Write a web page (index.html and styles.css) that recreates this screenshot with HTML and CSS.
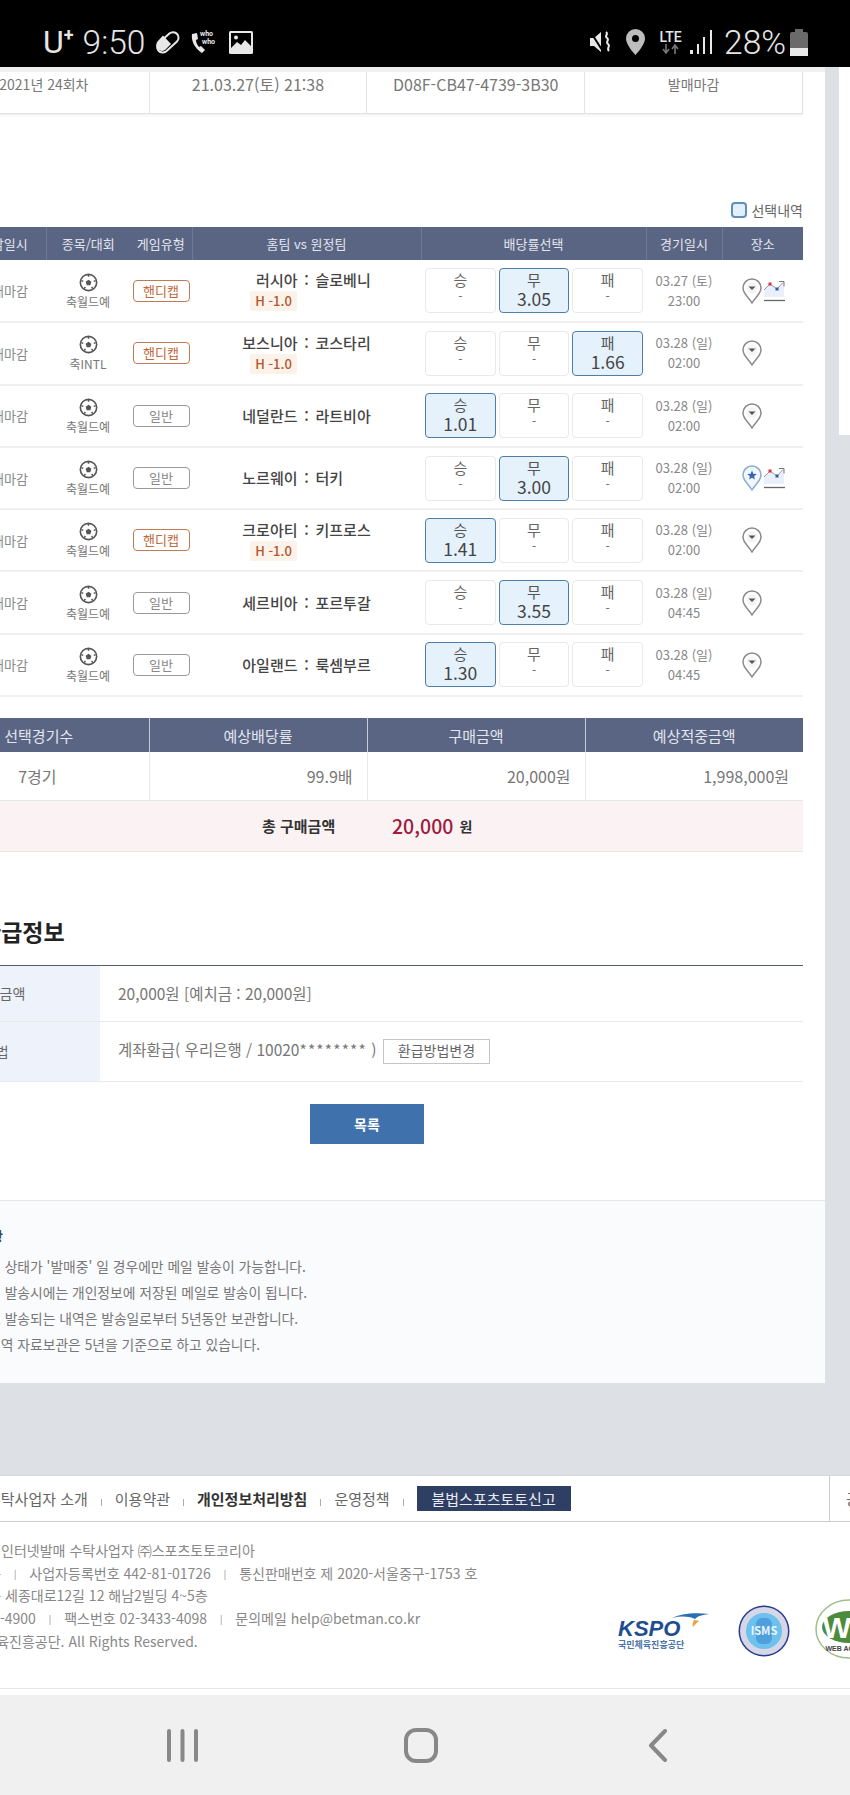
FILE: index.html
```html
<!DOCTYPE html>
<html lang="ko">

<head>
    <meta charset="UTF-8">
    <meta name="viewport" content="width=device-width, initial-scale=1.0">
    <title>구매내역 상세</title>
    <link rel="stylesheet" href="styles.css">
</head>

<body>
    <svg class="defs" width="0" height="0">
        <symbol id="ball" viewBox="0 0 20 20">
            <circle cx="10" cy="10" r="8.6" fill="#fff" stroke="#555" stroke-width="1.7" />
            <polygon points="10,7 13,9.2 11.9,12.8 8.1,12.8 7,9.2" fill="#555" />
            <path d="M10 2v2M2.5 8l2 .8M17.5 8l-2 .8M5.5 16.5l1.2-1.8M14.5 16.5l-1.2-1.8" stroke="#555" stroke-width="1.6" />
        </symbol>
        <symbol id="pin" viewBox="0 0 20 26">
            <path d="M10 25C7.5 20 1 16 1 10a9 9 0 0 1 18 0c0 6-6.500 10-9 15z" fill="#fff" stroke="#8a8a8a" stroke-width="1.500" />
            <circle cx="10" cy="10" r="5.500" fill="#f4f4f4" />
            <polygon points="6.500,8.500 13.500,8.500 10,12" fill="#555" />
        </symbol>
        <symbol id="pin-star" viewBox="0 0 20 26">
            <path d="M10 25C7.500 20 1 16 1 10a9 9 0 0 1 18 0c0 6-6.500 10-9 15z" fill="#f2f6fc" stroke="#86acd6" stroke-width="1.500" />
            <polygon points="10,5.500 11.300,8.800 14.700,9 12.100,11.200 12.900,14.500 10,12.700 7.100,14.500 7.900,11.200 5.300,9 8.700,8.800" fill="#3565b0" />
        </symbol>
        <symbol id="chart" viewBox="0 0 22 22">
            <polygon points="1,10 7,4 14,9 21,2 21,17 1,17" fill="#e9f0fb" />
            <polyline points="1,10 7,4 14,9 20,2.500" fill="none" stroke="#9a9a9a" stroke-width="1" />
            <path d="M16 1.500h5v5" fill="none" stroke="#777" stroke-width="1" />
            <rect x="5.500" y="2.500" width="3" height="3" fill="#d0393f" />
            <rect x="12.500" y="7.500" width="3" height="3" fill="#2d5bab" />
            <path d="M1 20.500h21" stroke="#666" stroke-width="1.300" />
        </symbol>
    </svg>

    <div class="statusbar">
        <div class="status-left">
            <span class="carrier">U<sup>+</sup></span>
            <span class="clock">9:50</span>
            <svg class="st-icon pill" width="27" height="24" viewBox="0 0 27 24">
                <rect x="1" y="7" width="25" height="11" rx="5.500" transform="rotate(-42 13.500 12)" fill="none" stroke="#e8e8e8" stroke-width="2" />
                <path d="M9 4.500l8 8.500-6 6a5.500 5.500 0 0 1-7-1 5.500 5.500 0 0 1-.5-7.500z" transform="translate(0 1)" fill="#e8e8e8" />
            </svg>
            <svg class="st-icon" width="30" height="26" viewBox="0 0 30 26">
                <path d="M3 5c-1 6 2 14 10 19l3-3-4-4-2 1c-2-2-3-5-3-7l2-1-1-6z" fill="#e8e8e8" />
                <text x="11" y="7" class="who">who</text>
                <text x="13" y="15" class="who">who</text>
            </svg>
            <svg class="st-icon" width="24" height="23" viewBox="0 0 24 23">
                <rect width="24" height="23" rx="1.500" fill="#e8e8e8" />
                <rect x="2" y="2" width="20" height="15" fill="#000" />
                <circle cx="7" cy="6.500" r="2" fill="#e8e8e8" />
                <path d="M2 17l6-6 4 3 4-5 6 6v2z" fill="#e8e8e8" />
            </svg>
        </div>
        <div class="status-right">
            <svg class="st-icon" width="24" height="26" viewBox="0 0 24 26">
                <path d="M1 9h4l7-6v20l-7-6H1z" fill="#e8e8e8" />
                <path d="M1 2l14 22" stroke="#000" stroke-width="2" />
                <path d="M17 3c3 2-2 4 1 6s-2 4 1 6-2 4 1 7" fill="none" stroke="#e8e8e8" stroke-width="2" />
            </svg>
            <svg class="st-icon" width="21" height="28" viewBox="0 0 21 28">
                <path fill-rule="evenodd" d="M10.500 1A9.500 9.500 0 0 0 1 10.500C1 17 10.500 27 10.500 27S20 17 20 10.500A9.500 9.500 0 0 0 10.500 1zm0 13a3.500 3.500 0 1 1 0-7 3.500 3.500 0 0 1 0 7z" fill="#bdbdbd" />
            </svg>
            <span class="lte">LTE<svg width="20" height="10" viewBox="0 0 20 10"><path d="M5 0v8M2 5l3 4 3-4" fill="none" stroke="#777" stroke-width="1.600" /><path d="M14 10V2M11 5l3-4 3 4" fill="none" stroke="#777" stroke-width="1.600" /></svg></span>
            <svg class="st-icon signal" width="23" height="26" viewBox="0 0 23 26">
                <rect x="0" y="21" width="3" height="4" fill="#e8e8e8" />
                <rect x="7" y="15" width="2" height="10" fill="#e8e8e8" />
                <rect x="13" y="8" width="2" height="17" fill="#e8e8e8" />
                <rect x="20" y="1" width="2" height="24" fill="#e8e8e8" />
            </svg>
            <span class="battery-text">28%</span>
            <div class="battery"><span></span></div>
        </div>
    </div>

    <div class="scroll">
        <div class="panel">
            <div class="content">
                <table class="info-top">
                    <tr>
                        <td>2021년 24회차</td>
                        <td class="num">21.03.27(토) 21:38</td>
                        <td class="num">D08F-CB47-4739-3B30</td>
                        <td>발매마감</td>
                    </tr>
                </table>

                <div class="legend"><span class="legend-box"></span>선택내역</div>

                <table class="games">
                    <colgroup>
                        <col class="c-close">
                        <col class="c-sport">
                        <col class="c-type">
                        <col class="c-team">
                        <col class="c-odds">
                        <col class="c-date">
                        <col class="c-place">
                    </colgroup>
                    <thead>
                        <tr>
                            <th>마감일시</th>
                            <th class="no-line">종목/대회</th>
                            <th>게임유형</th>
                            <th>홈팀 vs 원정팀</th>
                            <th>배당률선택</th>
                            <th>경기일시</th>
                            <th>장소</th>
                        </tr>
                    </thead>
                    <tbody>
                        <tr>
                            <td class="muted">발매마감</td>
                            <td class="sport"><svg class="ball"><use href="#ball" /></svg>축월드예</td>
                            <td><span class="tag tag-hc">핸디캡</span></td>
                            <td>
                                <div class="match"><span class="home">러시아</span><span>:</span><span>슬로베니</span></div>
                                <div class="chip">H -1.0</div>
                            </td>
                            <td>
                                <div class="odds">
                                    <div class="odd">승<b>-</b></div>
                                    <div class="odd on">무<b>3.05</b></div>
                                    <div class="odd">패<b>-</b></div>
                                </div>
                            </td>
                            <td class="date">03.27 (토)<br>23:00</td>
                            <td class="place"><svg class="pin"><use href="#pin" /></svg><svg class="chart"><use href="#chart" /></svg></td>
                        </tr>
                        <tr>
                            <td class="muted">발매마감</td>
                            <td class="sport"><svg class="ball"><use href="#ball" /></svg>축INTL</td>
                            <td><span class="tag tag-hc">핸디캡</span></td>
                            <td>
                                <div class="match"><span class="home">보스니아</span><span>:</span><span>코스타리</span></div>
                                <div class="chip">H -1.0</div>
                            </td>
                            <td>
                                <div class="odds">
                                    <div class="odd">승<b>-</b></div>
                                    <div class="odd">무<b>-</b></div>
                                    <div class="odd on">패<b>1.66</b></div>
                                </div>
                            </td>
                            <td class="date">03.28 (일)<br>02:00</td>
                            <td class="place"><svg class="pin"><use href="#pin" /></svg></td>
                        </tr>
                        <tr>
                            <td class="muted">발매마감</td>
                            <td class="sport"><svg class="ball"><use href="#ball" /></svg>축월드예</td>
                            <td><span class="tag">일반</span></td>
                            <td>
                                <div class="match"><span class="home">네덜란드</span><span>:</span><span>라트비아</span></div>
                            </td>
                            <td>
                                <div class="odds">
                                    <div class="odd on">승<b>1.01</b></div>
                                    <div class="odd">무<b>-</b></div>
                                    <div class="odd">패<b>-</b></div>
                                </div>
                            </td>
                            <td class="date">03.28 (일)<br>02:00</td>
                            <td class="place"><svg class="pin"><use href="#pin" /></svg></td>
                        </tr>
                        <tr>
                            <td class="muted">발매마감</td>
                            <td class="sport"><svg class="ball"><use href="#ball" /></svg>축월드예</td>
                            <td><span class="tag">일반</span></td>
                            <td>
                                <div class="match"><span class="home">노르웨이</span><span>:</span><span>터키</span></div>
                            </td>
                            <td>
                                <div class="odds">
                                    <div class="odd">승<b>-</b></div>
                                    <div class="odd on">무<b>3.00</b></div>
                                    <div class="odd">패<b>-</b></div>
                                </div>
                            </td>
                            <td class="date">03.28 (일)<br>02:00</td>
                            <td class="place"><svg class="pin"><use href="#pin-star" /></svg><svg class="chart"><use href="#chart" /></svg></td>
                        </tr>
                        <tr>
                            <td class="muted">발매마감</td>
                            <td class="sport"><svg class="ball"><use href="#ball" /></svg>축월드예</td>
                            <td><span class="tag tag-hc">핸디캡</span></td>
                            <td>
                                <div class="match"><span class="home">크로아티</span><span>:</span><span>키프로스</span></div>
                                <div class="chip">H -1.0</div>
                            </td>
                            <td>
                                <div class="odds">
                                    <div class="odd on">승<b>1.41</b></div>
                                    <div class="odd">무<b>-</b></div>
                                    <div class="odd">패<b>-</b></div>
                                </div>
                            </td>
                            <td class="date">03.28 (일)<br>02:00</td>
                            <td class="place"><svg class="pin"><use href="#pin" /></svg></td>
                        </tr>
                        <tr>
                            <td class="muted">발매마감</td>
                            <td class="sport"><svg class="ball"><use href="#ball" /></svg>축월드예</td>
                            <td><span class="tag">일반</span></td>
                            <td>
                                <div class="match"><span class="home">세르비아</span><span>:</span><span>포르투갈</span></div>
                            </td>
                            <td>
                                <div class="odds">
                                    <div class="odd">승<b>-</b></div>
                                    <div class="odd on">무<b>3.55</b></div>
                                    <div class="odd">패<b>-</b></div>
                                </div>
                            </td>
                            <td class="date">03.28 (일)<br>04:45</td>
                            <td class="place"><svg class="pin"><use href="#pin" /></svg></td>
                        </tr>
                        <tr>
                            <td class="muted">발매마감</td>
                            <td class="sport"><svg class="ball"><use href="#ball" /></svg>축월드예</td>
                            <td><span class="tag">일반</span></td>
                            <td>
                                <div class="match"><span class="home">아일랜드</span><span>:</span><span>룩셈부르</span></div>
                            </td>
                            <td>
                                <div class="odds">
                                    <div class="odd on">승<b>1.30</b></div>
                                    <div class="odd">무<b>-</b></div>
                                    <div class="odd">패<b>-</b></div>
                                </div>
                            </td>
                            <td class="date">03.28 (일)<br>04:45</td>
                            <td class="place"><svg class="pin"><use href="#pin" /></svg></td>
                        </tr>
                    </tbody>
                </table>

                <table class="summary">
                    <thead>
                        <tr>
                            <th>선택경기수</th>
                            <th>예상배당률</th>
                            <th>구매금액</th>
                            <th>예상적중금액</th>
                        </tr>
                    </thead>
                    <tbody>
                        <tr>
                            <td class="td-count">7경기</td>
                            <td>99.9배</td>
                            <td>20,000원</td>
                            <td>1,998,000원</td>
                        </tr>
                    </tbody>
                </table>
                <div class="total">
                    <span class="total-label">총 구매금액</span>
                    <span class="total-num">20,000</span>
                    <span class="total-won">원</span>
                </div>

                <h3 class="section-title">환급정보</h3>
                <table class="refund">
                    <tr>
                        <th>총 환급금액</th>
                        <td>20,000원 [예치금 : 20,000원]</td>
                    </tr>
                    <tr>
                        <th>환급방법</th>
                        <td>계좌환급( 우리은행 / 10020<span class="stars">********</span> ) <span class="btn-change">환급방법변경</span></td>
                    </tr>
                </table>
                <div class="actions"><a class="btn-list">목록</a></div>
            </div>

            <div class="notes">
                <h4>유의사항</h4>
                <ul>
                    <li>구매내역 상태가 '발매중' 일 경우에만 메일 발송이 가능합니다.</li>
                    <li>구매내역 발송시에는 개인정보에 저장된 메일로 발송이 됩니다.</li>
                    <li>이메일로 발송되는 내역은 발송일로부터 5년동안 보관합니다.</li>
                    <li>총적중내역 자료보관은 5년을 기준으로 하고 있습니다.</li>
                </ul>
            </div>
        </div>
        <div class="side"><div class="side-box"></div></div>
    </div>

    <footer class="footer">
        <div class="foot-nav">
            <ul class="foot-links">
                <li>수탁사업자 소개</li>
                <li>이용약관</li>
                <li class="strong">개인정보처리방침</li>
                <li>운영정책</li>
                <li class="report">불법스포츠토토신고</li>
            </ul>
            <div class="foot-family">공</div>
        </div>
        <div class="foot-body">
            <div class="foot-text">
                <p>체육진흥투표권 인터넷발매 수탁사업자 ㈜스포츠토토코리아</p>
                <p>대표이사 홍길동 <i>|</i> 사업자등록번호 442-81-01726 <i>|</i> 통신판매번호 제 2020-서울중구-1753 호</p>
                <p>주소 서울시중구 세종대로12길 12 해남2빌딩 4~5층</p>
                <p>전화 :&nbsp; 02-3433-4900 <i>|</i> 팩스번호 02-3433-4098 <i>|</i> 문의메일 help@betman.co.kr</p>
                <p>© 2021 국민체육진흥공단. All Rights Reserved.</p>
            </div>
            <div class="foot-logos">
                <div class="kspo">
                    <svg width="40" height="20" viewBox="0 0 40 20">
                        <path d="M2 6C10 2 24 0 39 2c-7 1-11 2-14 5C18 4 10 4 2 6z" fill="#2a6fb5" />
                        <path d="M24 8c3 0 5 1 5 1-2 1-4 4-6 6-1-2 0-5 1-7z" fill="#e9a43c" />
                    </svg>
                    <span class="kspo-name">KSPO</span>
                    <span class="kspo-sub">국민체육진흥공단</span>
                </div>
                <svg class="isms" width="54" height="54" viewBox="0 0 54 54">
                    <circle cx="27" cy="27" r="25.500" fill="#2a3a8c" />
                    <circle cx="27" cy="27" r="24" fill="#d5d7e6" />
                    <circle cx="27" cy="27" r="18" fill="#6cc1ee" />
                    <rect x="19" y="14" width="16" height="26" rx="6" fill="#4e9fdb" />
                    <text x="27" y="31" class="isms-text">ISMS</text>
                </svg>
                <svg class="wa" width="70" height="64" viewBox="0 0 70 64">
                    <ellipse cx="35" cy="30" rx="33" ry="29" fill="#fff" stroke="#9dbf8c" stroke-width="1.500" />
                    <ellipse cx="35" cy="28" rx="27" ry="16" fill="#4c8a3c" />
                    <text x="33" y="39" class="wa-text">WA</text>
                    <text x="35" y="52" class="wa-sub">WEB ACCESS</text>
                </svg>
            </div>
        </div>
    </footer>

    <div class="navbar">
        <svg width="33" height="33" viewBox="0 0 33 33">
            <path d="M3 2v29M16.500 2v29M30 2v29" stroke="#888" stroke-width="4" stroke-linecap="round" />
        </svg>
        <svg width="34" height="35" viewBox="0 0 34 35">
            <rect x="2" y="2" width="30" height="31" rx="10" fill="none" stroke="#888" stroke-width="4" />
        </svg>
        <svg width="20" height="33" viewBox="0 0 20 33">
            <path d="M17 2L3 16.500 17 31" fill="none" stroke="#888" stroke-width="4" stroke-linecap="round" stroke-linejoin="round" />
        </svg>
    </div>
</body>

</html>
```

FILE: styles.css
```css
* {
    box-sizing: border-box;
}

html,
body {
    margin: 0;
    width: 850px;
    height: 1795px;
    overflow: hidden;
}

body {
    font-family: "Noto Sans CJK KR", "Noto Sans", sans-serif;
    font-size: 13px;
    color: #666;
    background-color: #fff;
}

table {
    border-collapse: collapse;
    table-layout: fixed;
    width: 841px;
}

ul {
    list-style: none;
    margin: 0;
    padding: 0;
}

.defs {
    position: absolute;
}

/* status bar */
.statusbar {
    height: 67px;
    background-color: #000;
    color: #e6e6e6;
    display: flex;
    justify-content: space-between;
    align-items: center;
    padding: 17px 42px 0 43px;
    font-family: Roboto, sans-serif;
    font-weight: 300;
}

.status-left,
.status-right {
    display: flex;
    align-items: center;
}

.carrier {
    font-size: 32px;
    font-weight: 400;
    line-height: 34px;
}

.carrier sup {
    font-size: 18px;
    line-height: 0;
    vertical-align: 12px;
    font-weight: 700;
}

.clock {
    font-size: 33.5px;
    margin: 0 9px 0 9px;
}

.status-left .st-icon {
    margin-right: 10px;
}

.status-left .pill {
    margin-right: 8px;
}

.who {
    font-size: 7px;
    font-weight: 700;
    fill: #e8e8e8;
}

.status-right .st-icon {
    margin-right: 12px;
}

.lte {
    display: flex;
    flex-direction: column;
    align-items: center;
    font-size: 14px;
    font-weight: 500;
    line-height: 14px;
    margin-right: 7px;
    width: 25px;
}

.status-right .signal {
    margin-right: 11px;
}

.battery-text {
    font-size: 33.5px;
    margin-right: 4px;
}

.battery {
    width: 18px;
    height: 24px;
    margin-top: 3px;
    background-color: #6a6a6a;
    border-radius: 2px;
    position: relative;
    display: flex;
    align-items: flex-end;
}

.battery::before {
    content: "";
    position: absolute;
    top: -3px;
    left: 5px;
    width: 8px;
    height: 3px;
    background-color: #6a6a6a;
}

.battery span {
    display: block;
    width: 100%;
    height: 8px;
    background-color: #e8e8e8;
}

/* page */
.scroll {
    display: flex;
    height: 1408px;
    background-color: #dde0e5;
}

.panel {
    width: 863px;
    height: 1316px;
    margin-left: -38px;
    flex-shrink: 0;
    background-color: #fff;
    display: flex;
    flex-direction: column;
    border-top: 5px solid #f0f0f0;
}

.content {
    flex: 1;
}

.side {
    width: 25px;
    flex-shrink: 0;
    padding-left: 14px;
}

.side-box {
    width: 11px;
    height: 368px;
    background-color: #fff;
}

.info-top {
    height: 42px;
    border-bottom: 1px solid #dfe1e5;
    box-shadow: 0 2px 2px #f3f3f3;
}

.info-top td {
    text-align: center;
    vertical-align: top;
    padding-top: 2px;
    font-size: 14px;
    line-height: 20px;
    color: #777;
    border-right: 1px solid #e4e4e4;
}

.info-top .num {
    font-size: 16px;
}

.info-top td:first-child {
    width: 187px;
    text-align: right;
    padding-right: 60px;
}

.legend {
    display: flex;
    justify-content: flex-end;
    align-items: center;
    margin: 86px 22px 0 0;
    height: 20px;
    font-size: 14px;
    color: #666;
}

.legend-box {
    width: 16px;
    height: 16px;
    margin-right: 4px;
    background-color: #e3f0fb;
    border: 2px solid #5d90bd;
    border-radius: 4px;
}

/* game table */
.games {
    margin-top: 7px;
}

.c-close {
    width: 84px;
}

.c-sport {
    width: 84px;
}

.c-type {
    width: 62px;
}

.c-team {
    width: 229px;
}

.c-odds {
    width: 225px;
}

.c-date {
    width: 76px;
}

.c-place {
    width: 81px;
}

.games th,
.summary th {
    background-color: #5a6583;
    color: #e3e6ef;
    font-weight: 400;
    font-size: 13px;
    height: 33px;
    padding: 0;
    border-right: 1px solid #6f7995;
}

.games th:last-child,
.summary th:last-child {
    border-right: none;
}

.games th.no-line {
    border-right: none;
}

.games td {
    height: 62.3px;
    padding: 0;
    text-align: center;
    border-bottom: 2px solid #eeeff1;
    font-size: 13px;
    color: #888;
}

.games .sport {
    font-size: 12px;
    line-height: 14px;
    color: #777;
}

.ball {
    display: block;
    width: 19px;
    height: 19px;
    margin: 0 auto 3px;
}

.tag {
    display: inline-block;
    width: 57px;
    height: 22px;
    line-height: 19px;
    border: 1.5px solid #999;
    border-radius: 4px;
    font-size: 13px;
    color: #888;
}

.tag-hc {
    border-color: #c27a55;
    color: #c0683a;
}

.match {
    display: grid;
    grid-template-columns: 1fr 18px 1fr;
    font-size: 15px;
    font-weight: 500;
    line-height: 20px;
    color: #444;
    text-align: left;
}

.match span:nth-child(2) {
    text-align: center;
}

.home {
    text-align: right;
}

.games .chip {
    width: 47px;
    height: 20px;
    line-height: 20px;
    margin: 1px 0 0 58px;
    background-color: #fbf2ea;
    color: #b5552d;
    font-size: 13px;
    font-weight: 500;
    text-align: center;
    border-radius: 2px;
}

.odds {
    display: flex;
    gap: 3px;
    justify-content: flex-end;
    padding-right: 3px;
}

.odd {
    width: 70.7px;
    height: 45px;
    border: 1.5px solid #e8e9ea;
    border-radius: 4px;
    font-size: 15px;
    line-height: 17px;
    padding-top: 2px;
    color: #666;
    background-color: #fff;
}

.odd b {
    display: block;
    font-weight: 400;
    font-size: 12px;
    line-height: 16px;
}

.odd.on {
    background-color: #e5f1fb;
    border-color: #4f7fa8;
    color: #555;
}

.odd.on b {
    font-size: 17.5px;
    line-height: 22px;
    color: #444;
}

.date {
    line-height: 20px;
}

.games .place {
    text-align: left;
    padding-left: 20px;
}

.pin {
    width: 20px;
    height: 26px;
    vertical-align: middle;
}

.chart {
    width: 22px;
    height: 22px;
    margin-left: 1px;
    vertical-align: middle;
}

/* summary */
.summary {
    margin-top: 21px;
}

.summary th:nth-child(1) {
    width: 187px;
    padding-right: 33px;
}

.summary th:nth-child(2),
.summary th:nth-child(3) {
    width: 218px;
}

.summary th {
    height: 34px;
    font-size: 15px;
    border-right: 1px solid #c8ccd6;
}

.summary td {
    height: 48px;
    padding: 0 14px 0 0;
    text-align: right;
    font-size: 16px;
    color: #777;
    border-right: 1px solid #e8e8e8;
    border-bottom: 1px solid #e8e8e8;
}

.summary .td-count {
    padding-right: 92px;
}

.summary td:last-child {
    border-right: none;
}

.total {
    display: flex;
    align-items: center;
    width: 841px;
    height: 51px;
    padding-left: 300px;
    background-color: #faf2f3;
    border-bottom: 1px solid #eee4e6;
}

.total-label {
    font-size: 15px;
    font-weight: 700;
    color: #333;
    width: 130px;
}

.total-num {
    font-size: 19.5px;
    font-weight: 500;
    color: #a01b3e;
    margin-right: 6px;
}

.total-won {
    font-size: 14px;
    font-weight: 700;
    color: #333;
}

.section-title {
    margin: 62px 0 0 18px;
    font-size: 23px;
    line-height: 34px;
    font-weight: 700;
    color: #222;
}

.refund {
    margin-top: 17px;
    border-top: 1px solid #555e6e;
}

.refund th {
    width: 138px;
    background-color: #eef2fa;
    font-weight: 400;
    font-size: 14px;
    text-align: left;
    text-indent: -5px;
    padding-left: 0;
    color: #666;
    border-bottom: 1px solid #e8e9ec;
}

.refund td {
    padding-left: 18px;
    font-size: 15.5px;
    color: #777;
    border-bottom: 1px solid #e8e9ec;
}

.refund tr:first-child th,
.refund tr:first-child td {
    height: 56px;
}

.refund tr:last-child th,
.refund tr:last-child td {
    height: 60px;
}

.stars {
    letter-spacing: 1.2px;
}

.btn-change {
    display: inline-block;
    width: 107px;
    height: 25px;
    line-height: 21px;
    margin-left: 2px;
    border: 1.5px solid #c4c4c4;
    text-align: center;
    font-size: 14px;
    color: #666;
}

.actions {
    display: flex;
    justify-content: center;
    width: 810px;
    margin-top: 22px;
}

.btn-list {
    width: 114px;
    height: 40px;
    line-height: 40px;
    text-align: center;
    background-color: #3f72ad;
    color: #fff;
    font-size: 14px;
    font-weight: 700;
}

/* notes */
.notes {
    height: 183px;
    background-color: #fafbfd;
    border-top: 1px solid #e5e7ea;
    padding-top: 25px;
}

.notes h4 {
    margin: 0 0 0 -7px;
    font-size: 13px;
    font-weight: 700;
    line-height: 20px;
    color: #444;
}

.notes ul {
    margin-top: 7px;
}

.notes li {
    font-size: 13.8px;
    line-height: 26px;
    color: #777;
    margin-left: -12px;
}

/* footer */
.footer {
    height: 214px;
    background-color: #fff;
    border-bottom: 1px solid #e6e6e6;
    margin-bottom: 6px;
    border-top: 1px solid #d5d7da;
}

.foot-nav {
    display: flex;
    height: 46px;
    border-bottom: 1px solid #ccc;
    justify-content: space-between;
    font-size: 15px;
    color: #666;
}

.foot-links {
    display: flex;
    align-items: center;
    margin-left: -13px;
}

.foot-links li {
    padding-right: 27px;
    position: relative;
}

.foot-links li:not(.report)::after {
    content: "";
    position: absolute;
    right: 13px;
    top: 50%;
    width: 1px;
    height: 7px;
    background-color: #aaa;
}

.foot-links .strong {
    font-weight: 700;
    color: #333;
}

.foot-links .report {
    width: 154px;
    height: 25px;
    line-height: 25px;
    padding: 0;
    background-color: #2f3e63;
    color: #e8ebf2;
    text-align: center;
}

.foot-family {
    width: 21px;
    border-left: 1px solid #ccc;
    padding: 12px 0 0 16px;
    overflow: hidden;
    white-space: nowrap;
}

.foot-body {
    display: flex;
    position: relative;
    height: 166px;
}

.foot-text {
    margin: 17px 0 0 -93px;
    width: 600px;
    flex-shrink: 0;
    font-size: 14px;
    color: #888;
}

.foot-text p {
    margin: 0;
    height: 22.7px;
    line-height: 22.7px;
    white-space: nowrap;
}

.foot-text i {
    font-style: normal;
    font-size: 9px;
    line-height: 0;
    margin: 0 9px;
    vertical-align: 1px;
}

.foot-logos {
    display: flex;
    align-items: center;
    position: absolute;
    left: 618px;
    top: 77px;
}

.kspo {
    width: 92px;
    height: 38px;
    position: relative;
    line-height: 1;
}

.kspo svg {
    position: absolute;
    right: 0;
    top: 0;
}

.kspo-name {
    position: absolute;
    left: 0;
    top: 6px;
    font-family: "Liberation Sans", sans-serif;
    font-size: 22px;
    font-weight: 700;
    font-style: italic;
    color: #1d4e8f;
}

.kspo-sub {
    position: absolute;
    left: 0;
    top: 28px;
    font-size: 9px;
    font-weight: 700;
    color: #4b74a8;
}

.isms {
    margin-left: 27px;
}

.isms-text {
    font-size: 11px;
    font-weight: 700;
    fill: #eaf6fd;
    text-anchor: middle;
}

.wa {
    margin-left: 23px;
    flex-shrink: 0;
}

.wa-text {
    font-family: "Liberation Sans", sans-serif;
    font-size: 30px;
    font-weight: 700;
    fill: #fff;
    text-anchor: middle;
}

.wa-sub {
    font-family: "Liberation Sans", sans-serif;
    font-size: 7px;
    font-weight: 700;
    fill: #444;
    text-anchor: middle;
}

/* android nav */
.navbar {
    height: 100px;
    background-color: #f0f0f0;
    display: flex;
    align-items: center;
    padding-left: 166px;
}

.navbar svg:nth-child(2) {
    margin-left: 205px;
}

.navbar svg:nth-child(3) {
    margin-left: 210px;
}
```
